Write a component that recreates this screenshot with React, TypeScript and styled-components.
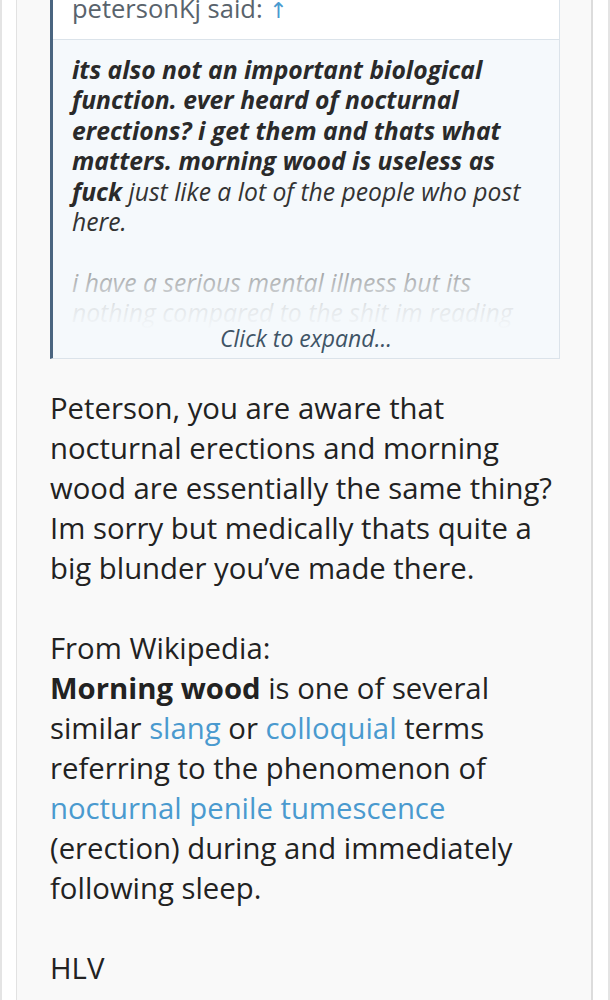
import React from "react";
import styled, { createGlobalStyle } from "styled-components";

const GlobalStyle = createGlobalStyle`
  html, body {
    margin: 0;
    padding: 0;
    background: #e4e4e4;
    font-family: "Open Sans", "Noto Sans", "DejaVu Sans", sans-serif;
  }
`;

const Frame = styled.div`
  margin: 0 2px;
  background: #ffffff;
  padding: 0 15px 0 14px;
  min-height: 1000px;
  overflow: hidden;
`;

const Post = styled.article`
  border-left: 1px solid #e2e2e2;
  border-right: 2px solid #dcdcdc;
  background: #f9f9f9;
  padding: 0 31px 40px 33px;
  min-height: 1000px;
`;

const Quote = styled.blockquote`
  margin: -22px 0 29px;
  border: 1px solid #dbe3ea;
  border-left: 3px solid #4a6580;
  background: #f5f9fc;
`;

const QuoteHeader = styled.div`
  background: #ffffff;
  padding: 12px 20px 12px 19px;
  border-bottom: 1px solid #dbe3ea;
  font-size: 25.5px;
  line-height: 35px;
  color: #59636c;
`;

const UpArrow = styled.span`
  color: #4a9acf;
  font-size: 22px;
`;

const QuoteBody = styled.div`
  position: relative;
  height: 303px;
  overflow: hidden;
  padding: 15px 20px 0 19px;
  font-size: 24.7px;
  line-height: 30.4px;
  font-style: italic;
  color: #333333;
`;

const Para = styled.p`
  margin: 0 0 30.4px;
`;

const Strong = styled.b`
  font-weight: 700;
  color: #2a2a2a;
`;

const ExpandOverlay = styled.div`
  position: absolute;
  left: 0;
  right: 0;
  bottom: 0;
  height: 128px;
  display: flex;
  align-items: flex-end;
  justify-content: center;
  padding-bottom: 5px;
  box-sizing: border-box;
  background: linear-gradient(
    to bottom,
    rgba(245, 249, 252, 0) 0%,
    rgba(245, 249, 252, 0.6) 35%,
    rgba(245, 249, 252, 0.9) 60%,
    rgba(245, 249, 252, 1) 78%
  );
`;

const ExpandLink = styled.span`
  font-size: 23px;
  font-style: italic;
  color: #3f5466;
`;

const Message = styled.div`
  font-size: 29.3px;
  line-height: 40px;
  color: #222222;
`;

const Link = styled.a`
  color: #4a9acf;
  text-decoration: none;
`;

export default function App() {
  return (
    <>
      <GlobalStyle />
      <Frame>
        <Post>
          <Quote>
            <QuoteHeader>
              petersonKj said: <UpArrow>↑</UpArrow>
            </QuoteHeader>
            <QuoteBody>
              <Para>
                <Strong>
                  its also not an important biological function. ever heard of nocturnal
                  erections? i get them and thats what matters. morning wood is useless as
                  fuck
                </Strong>{" "}
                just like a lot of the people who post here.
              </Para>
              <Para>
                i have a serious mental illness but its nothing compared to the shit im
                reading here on a daily basis
              </Para>
              <ExpandOverlay>
                <ExpandLink>Click to expand...</ExpandLink>
              </ExpandOverlay>
            </QuoteBody>
          </Quote>
          <Message>
            Peterson, you are aware that nocturnal erections and morning wood are
            essentially the same thing? Im sorry but medically thats quite a big blunder
            you’ve made there.
            <br />
            <br />
            From Wikipedia:
            <br />
            <b>Morning wood</b> is one of several similar <Link>slang</Link> or{" "}
            <Link>colloquial</Link> terms referring to the phenomenon of{" "}
            <Link>nocturnal penile tumescence</Link> (erection) during and immediately
            following sleep.
            <br />
            <br />
            HLV
          </Message>
        </Post>
      </Frame>
    </>
  );
}
